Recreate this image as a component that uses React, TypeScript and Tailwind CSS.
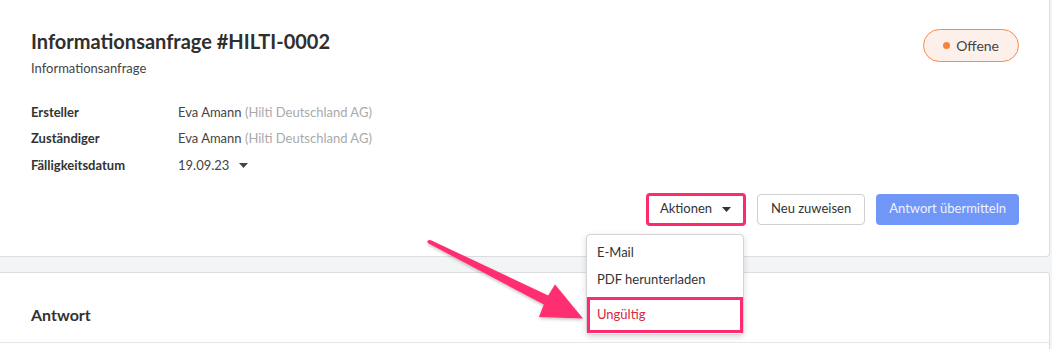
const rows = [
  { label: "Ersteller", name: "Eva Amann", org: "(Hilti Deutschland AG)" },
  { label: "Zuständiger", name: "Eva Amann", org: "(Hilti Deutschland AG)" },
];

function Caret() {
  return (
    <svg width="9" height="5" viewBox="0 0 9 5" className="fill-current" aria-hidden>
      <path d="M0 0h9L4.5 5z" />
    </svg>
  );
}

function Arrow() {
  // annotation arrow pointing at "Ungültig"
  return (
    <svg
      className="pointer-events-none absolute left-0 top-0"
      width="1052"
      height="349"
      viewBox="0 0 1052 349"
      aria-hidden
    >
      <defs>
        <filter id="sh" x="-10%" y="-10%" width="120%" height="130%">
          <feDropShadow dx="0" dy="1.5" stdDeviation="1.5" floodColor="#000" floodOpacity="0.25" />
        </filter>
      </defs>
      <path
        filter="url(#sh)"
        fill="#ff2d6f"
        d="M429.1 243.8 L543.8 304.5 L539 317 L583 318.5 L555 284.5 L548.2 295.5 L430.9 240.2 Q427 239.5 427.5 242.5 Z"
      />
    </svg>
  );
}

export default function App() {
  return (
    <div className="relative flex h-[349px] w-[1052px] flex-col overflow-hidden bg-[#f3f4f6] font-['Lato','Open_Sans',sans-serif] text-[#333]">
      <div className="flex h-[257px] w-[1050px] shrink-0 flex-col rounded-br border-r border-b border-[#dcdde1] bg-white pl-[31px] pr-[30px] pt-[27px]">
        <div className="flex items-start justify-between">
          <div>
            <h1 className="text-[20px] font-bold leading-[28px] text-[#2f2f2f]">Informationsanfrage #HILTI-0002</h1>
            <div className="mt-[3px] text-[13px] leading-[20px] text-[#444]">Informationsanfrage</div>
          </div>
          <span className="mt-[2px] flex h-[33px] items-center gap-[6px] rounded-full border border-[#f58a4c] bg-[#fdf0ea] pl-[19px] pr-[19px] text-[14px] text-[#444]">
            <span className="h-[7px] w-[7px] rounded-full bg-[#f5823f]" />
            Offene
          </span>
        </div>

        <div className="mt-[21px] flex flex-col text-[13px]">
          {rows.map((r) => (
            <div key={r.label} className="flex h-[26.5px] items-center">
              <span className="w-[147px] font-bold text-[#333]">{r.label}</span>
              <span className="text-[#444]">
                {r.name} <span className="text-[#aaa]">{r.org}</span>
              </span>
            </div>
          ))}
          <div className="flex h-[26.5px] items-center">
            <span className="w-[147px] font-bold text-[#333]">Fälligkeitsdatum</span>
            <span className="flex items-center gap-[10px] text-[#444]">
              19.09.23
              <Caret />
            </span>
          </div>
        </div>

        <div className="mt-[14px] flex items-center justify-end gap-[11px] text-[13px]">
          <div className="relative">
            <button className="flex h-[33px] items-center gap-[10px] rounded-sm border-[3px] border-[#fc2c6c] bg-white pl-[11px] pr-[12px] text-[#333]">
              Aktionen
              <Caret />
            </button>
            <div className="absolute left-[-60px] top-[41px] z-10 w-[158px] rounded border border-[#d4d4d6] bg-white pt-[5px] pb-[1px] shadow-[0_2px_6px_rgba(0,0,0,0.15)]">
              <div className="flex h-[27px] items-center px-[10px] text-[#333]">E-Mail</div>
              <div className="flex h-[27px] items-center px-[10px] text-[#333]">PDF herunterladen</div>
              <div className="mt-[3px] flex h-[36px] items-center border-[3px] border-[#fc2c6c] px-[7px] text-[#d8283f]">
                Ungültig
              </div>
            </div>
          </div>
          <button className="h-[31px] rounded-sm border border-[#cfcfd2] bg-white px-[13px] text-[#333]">Neu zuweisen</button>
          <button className="h-[31px] rounded-sm bg-[#7097f8] px-[13px] text-[#eef2fe]">Antwort übermitteln</button>
        </div>
      </div>

      <div className="mt-[15px] w-[1050px] flex-1 rounded-tr border-t border-r border-[#dcdde1] bg-white">
        <div className="border-b border-[#e6e7ea] pl-[31px] pt-[32px] pb-[17px]">
          <h2 className="text-[16px] font-bold leading-[20px] text-[#333]">Antwort</h2>
        </div>
      </div>

      <Arrow />
    </div>
  );
}
